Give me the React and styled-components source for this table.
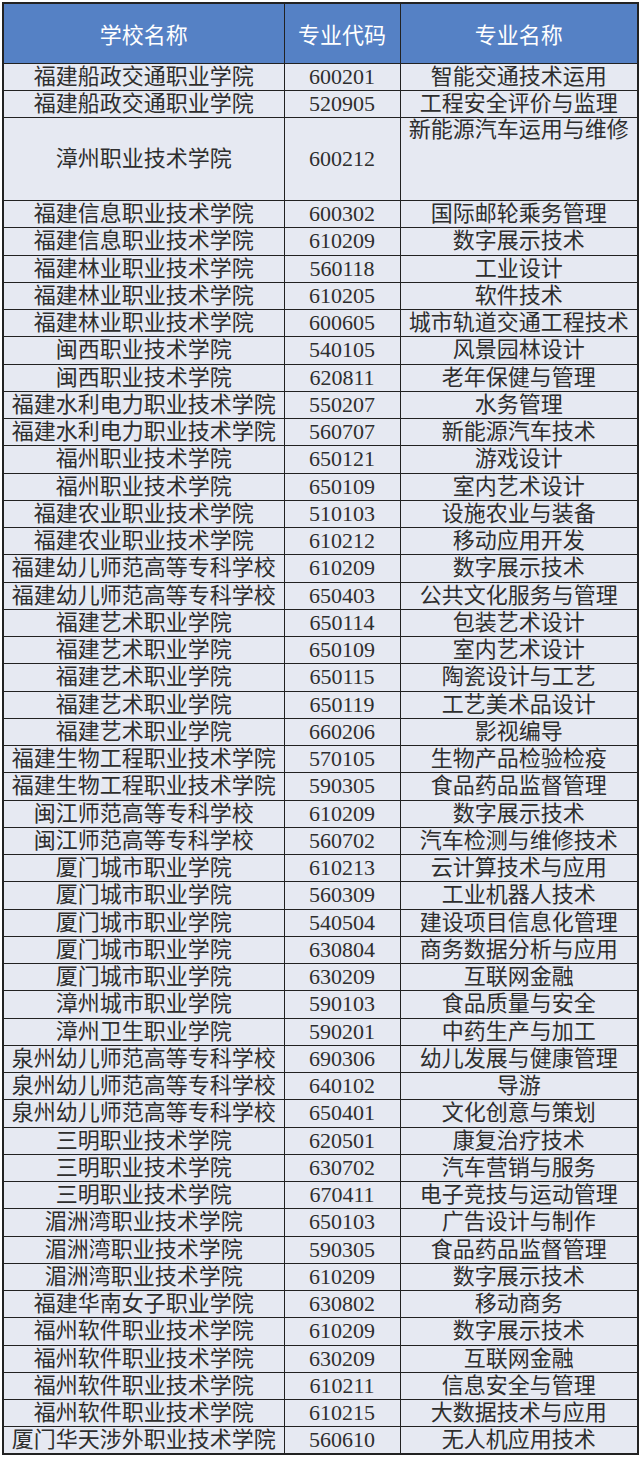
import React from 'react';
import styled, { createGlobalStyle } from 'styled-components';

const GlobalStyle = createGlobalStyle`
  html, body {
    margin: 0;
    padding: 0;
    background: #ffffff;
  }
`;

const rows = [
  ['福建船政交通职业学院', '600201', '智能交通技术运用'],
  ['福建船政交通职业学院', '520905', '工程安全评价与监理'],
  ['漳州职业技术学院', '600212', '新能源汽车运用与维修', true],
  ['福建信息职业技术学院', '600302', '国际邮轮乘务管理'],
  ['福建信息职业技术学院', '610209', '数字展示技术'],
  ['福建林业职业技术学院', '560118', '工业设计'],
  ['福建林业职业技术学院', '610205', '软件技术'],
  ['福建林业职业技术学院', '600605', '城市轨道交通工程技术'],
  ['闽西职业技术学院', '540105', '风景园林设计'],
  ['闽西职业技术学院', '620811', '老年保健与管理'],
  ['福建水利电力职业技术学院', '550207', '水务管理'],
  ['福建水利电力职业技术学院', '560707', '新能源汽车技术'],
  ['福州职业技术学院', '650121', '游戏设计'],
  ['福州职业技术学院', '650109', '室内艺术设计'],
  ['福建农业职业技术学院', '510103', '设施农业与装备'],
  ['福建农业职业技术学院', '610212', '移动应用开发'],
  ['福建幼儿师范高等专科学校', '610209', '数字展示技术'],
  ['福建幼儿师范高等专科学校', '650403', '公共文化服务与管理'],
  ['福建艺术职业学院', '650114', '包装艺术设计'],
  ['福建艺术职业学院', '650109', '室内艺术设计'],
  ['福建艺术职业学院', '650115', '陶瓷设计与工艺'],
  ['福建艺术职业学院', '650119', '工艺美术品设计'],
  ['福建艺术职业学院', '660206', '影视编导'],
  ['福建生物工程职业技术学院', '570105', '生物产品检验检疫'],
  ['福建生物工程职业技术学院', '590305', '食品药品监督管理'],
  ['闽江师范高等专科学校', '610209', '数字展示技术'],
  ['闽江师范高等专科学校', '560702', '汽车检测与维修技术'],
  ['厦门城市职业学院', '610213', '云计算技术与应用'],
  ['厦门城市职业学院', '560309', '工业机器人技术'],
  ['厦门城市职业学院', '540504', '建设项目信息化管理'],
  ['厦门城市职业学院', '630804', '商务数据分析与应用'],
  ['厦门城市职业学院', '630209', '互联网金融'],
  ['漳州城市职业学院', '590103', '食品质量与安全'],
  ['漳州卫生职业学院', '590201', '中药生产与加工'],
  ['泉州幼儿师范高等专科学校', '690306', '幼儿发展与健康管理'],
  ['泉州幼儿师范高等专科学校', '640102', '导游'],
  ['泉州幼儿师范高等专科学校', '650401', '文化创意与策划'],
  ['三明职业技术学院', '620501', '康复治疗技术'],
  ['三明职业技术学院', '630702', '汽车营销与服务'],
  ['三明职业技术学院', '670411', '电子竞技与运动管理'],
  ['湄洲湾职业技术学院', '650103', '广告设计与制作'],
  ['湄洲湾职业技术学院', '590305', '食品药品监督管理'],
  ['湄洲湾职业技术学院', '610209', '数字展示技术'],
  ['福建华南女子职业学院', '630802', '移动商务'],
  ['福州软件职业技术学院', '610209', '数字展示技术'],
  ['福州软件职业技术学院', '630209', '互联网金融'],
  ['福州软件职业技术学院', '610211', '信息安全与管理'],
  ['福州软件职业技术学院', '610215', '大数据技术与应用'],
  ['厦门华天涉外职业技术学院', '560610', '无人机应用技术'],
];

const Page = styled.div`
  padding: 2px 0 0 2px;
`;

const Table = styled.table`
  width: 635px;
  table-layout: fixed;
  border-collapse: collapse;
  border: 2px solid #222;
`;

const HeadRow = styled.tr`
  height: 60px;
`;

const HeadCell = styled.th`
  background: #5581c5;
  color: #ffffff;
  font-family: 'Noto Sans CJK SC', 'Noto Sans', sans-serif;
  font-weight: 400;
  font-size: 22px;
  border: 1.5px solid #222;
  padding: 0;
  text-align: center;
  vertical-align: middle;
`;

const Row = styled.tr`
  height: ${({ tall }) => (tall ? '83px' : '27.25px')};
`;

const Cell = styled.td`
  background: #e6e9f2;
  color: #2e2e2e;
  font-family: 'Liberation Serif', 'Noto Sans CJK SC', serif;
  font-size: 22px;
  line-height: 24px;
  border: 1.5px solid #222;
  padding: 0;
  text-align: center;
  white-space: nowrap;
  vertical-align: ${({ top }) => (top ? 'top' : 'middle')};
`;

export default function App() {
  return (
    <Page>
      <GlobalStyle />
      <Table>
        <colgroup>
          <col style={{ width: '281px' }} />
          <col style={{ width: '116px' }} />
          <col style={{ width: '238px' }} />
        </colgroup>
        <thead>
          <HeadRow>
            <HeadCell>学校名称</HeadCell>
            <HeadCell>专业代码</HeadCell>
            <HeadCell>专业名称</HeadCell>
          </HeadRow>
        </thead>
        <tbody>
          {rows.map(([school, code, major, tall], i) => (
            <Row key={i} tall={tall ? 1 : 0}>
              <Cell>{school}</Cell>
              <Cell>{code}</Cell>
              <Cell top={tall ? 1 : 0}>{major}</Cell>
            </Row>
          ))}
        </tbody>
      </Table>
    </Page>
  );
}
